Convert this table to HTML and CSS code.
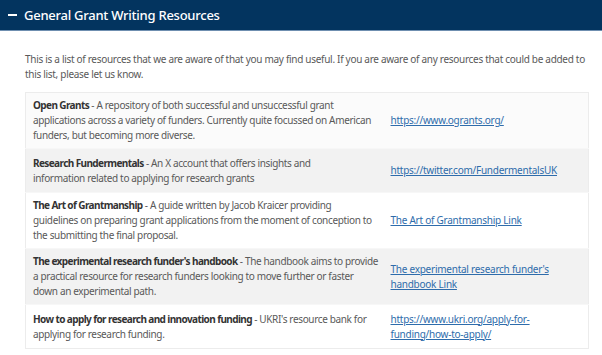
FILE: index.html
```html
<!DOCTYPE html>
<html lang="en">
<head>
<meta charset="utf-8">
<title>General Grant Writing Resources</title>
<link rel="stylesheet" href="styles.css">
</head>
<body>
<section class="panel">
  <header class="panel-head">
    <span class="toggle" aria-hidden="true"></span>
    <h2 class="panel-title">General Grant Writing Resources</h2>
  </header>
  <div class="panel-body">
    <p class="intro">This is a list of resources that we are aware of that you may find useful. If you are aware of any resources that could be added to this list, please let us know.</p>
    <table class="res-table">
      <colgroup><col class="c-desc"><col class="c-link"></colgroup>
      <tbody>
        <tr class="r-a">
          <td class="desc"><strong>Open Grants</strong> - A repository of both successful and unsuccessful grant<br>applications across a variety of funders. Currently quite focussed on American<br>funders, but becoming more diverse.</td>
          <td><a href="#">https://www.ogrants.org/</a></td>
        </tr>
        <tr class="r-b">
          <td class="desc"><strong>Research Fundermentals</strong> - An X account that offers insights and<br>information related to applying for research grants</td>
          <td><a href="#">https://twitter.com/FundermentalsUK</a></td>
        </tr>
        <tr class="r-c">
          <td class="desc"><strong>The Art of Grantmanship</strong> - A guide written by Jacob Kraicer providing<br>guidelines on preparing grant applications from the moment of conception to<br>the submitting the final proposal.</td>
          <td><a href="#">The Art of Grantmanship Link</a></td>
        </tr>
        <tr class="r-b">
          <td class="desc"><strong>The experimental research funder's handbook</strong> - The handbook aims to provide<br>a practical resource for research funders looking to move further or faster<br>down an experimental path.</td>
          <td><a href="#">The experimental research funder's handbook Link</a></td>
        </tr>
        <tr class="r-c">
          <td class="desc"><strong>How to apply for research and innovation funding</strong> - UKRI's resource bank for<br>applying for research funding.</td>
          <td><a href="#">https://www.ukri.org/apply-for-funding/how-to-apply/</a></td>
        </tr>
      </tbody>
    </table>
  </div>
</section>
</body>
</html>
```
FILE: styles.css
```css
html, body {
  margin: 0;
  padding: 0;
  background: #ffffff;
}
body {
  font-family: "Noto Sans", "DejaVu Sans", sans-serif;
  color: #595959;
}
.panel-head {
  display: flex;
  align-items: center;
  height: 30px;
  background: #03345f;
  border-bottom: 1px solid #6f8fb0;
  padding-left: 8px;
}
.toggle {
  width: 9px;
  height: 2px;
  background: #ffffff;
  margin-right: 7px;
}
.panel-title {
  margin: 0;
  font-size: 13px;
  font-weight: 500;
  letter-spacing: -0.25px;
  color: #ffffff;
}
.panel-body {
  padding: 21px 14px 0 25px;
}
.intro {
  margin: 0 0 11px 0;
  font-size: 10px;
  line-height: 14.5px;
  letter-spacing: -0.3px;
}
.res-table {
  width: 563px;
  border-collapse: collapse;
  table-layout: fixed;
  border: 1px solid #ececec;
  font-size: 10px;
  line-height: 15px;
  letter-spacing: -0.35px;
}
.c-desc { width: 358px; }
.c-link { width: 205px; }
.res-table tr { height: 44px; }
.res-table td {
  padding: 5px 7px;
  vertical-align: middle;
}
.res-table td.desc { white-space: nowrap; }
.res-table strong {
  color: #333333;
  font-weight: 700;
  letter-spacing: -0.6px;
}
.r-a { background: #fbfbfb; }
.r-b { background: #f2f2f2; }
.r-c { background: #ffffff; }
.res-table tr + tr td { border-top: 1px solid #f7f7f7; }
.res-table a {
  color: #2e6cab;
  text-decoration: underline;
  letter-spacing: -0.25px;
}
```
